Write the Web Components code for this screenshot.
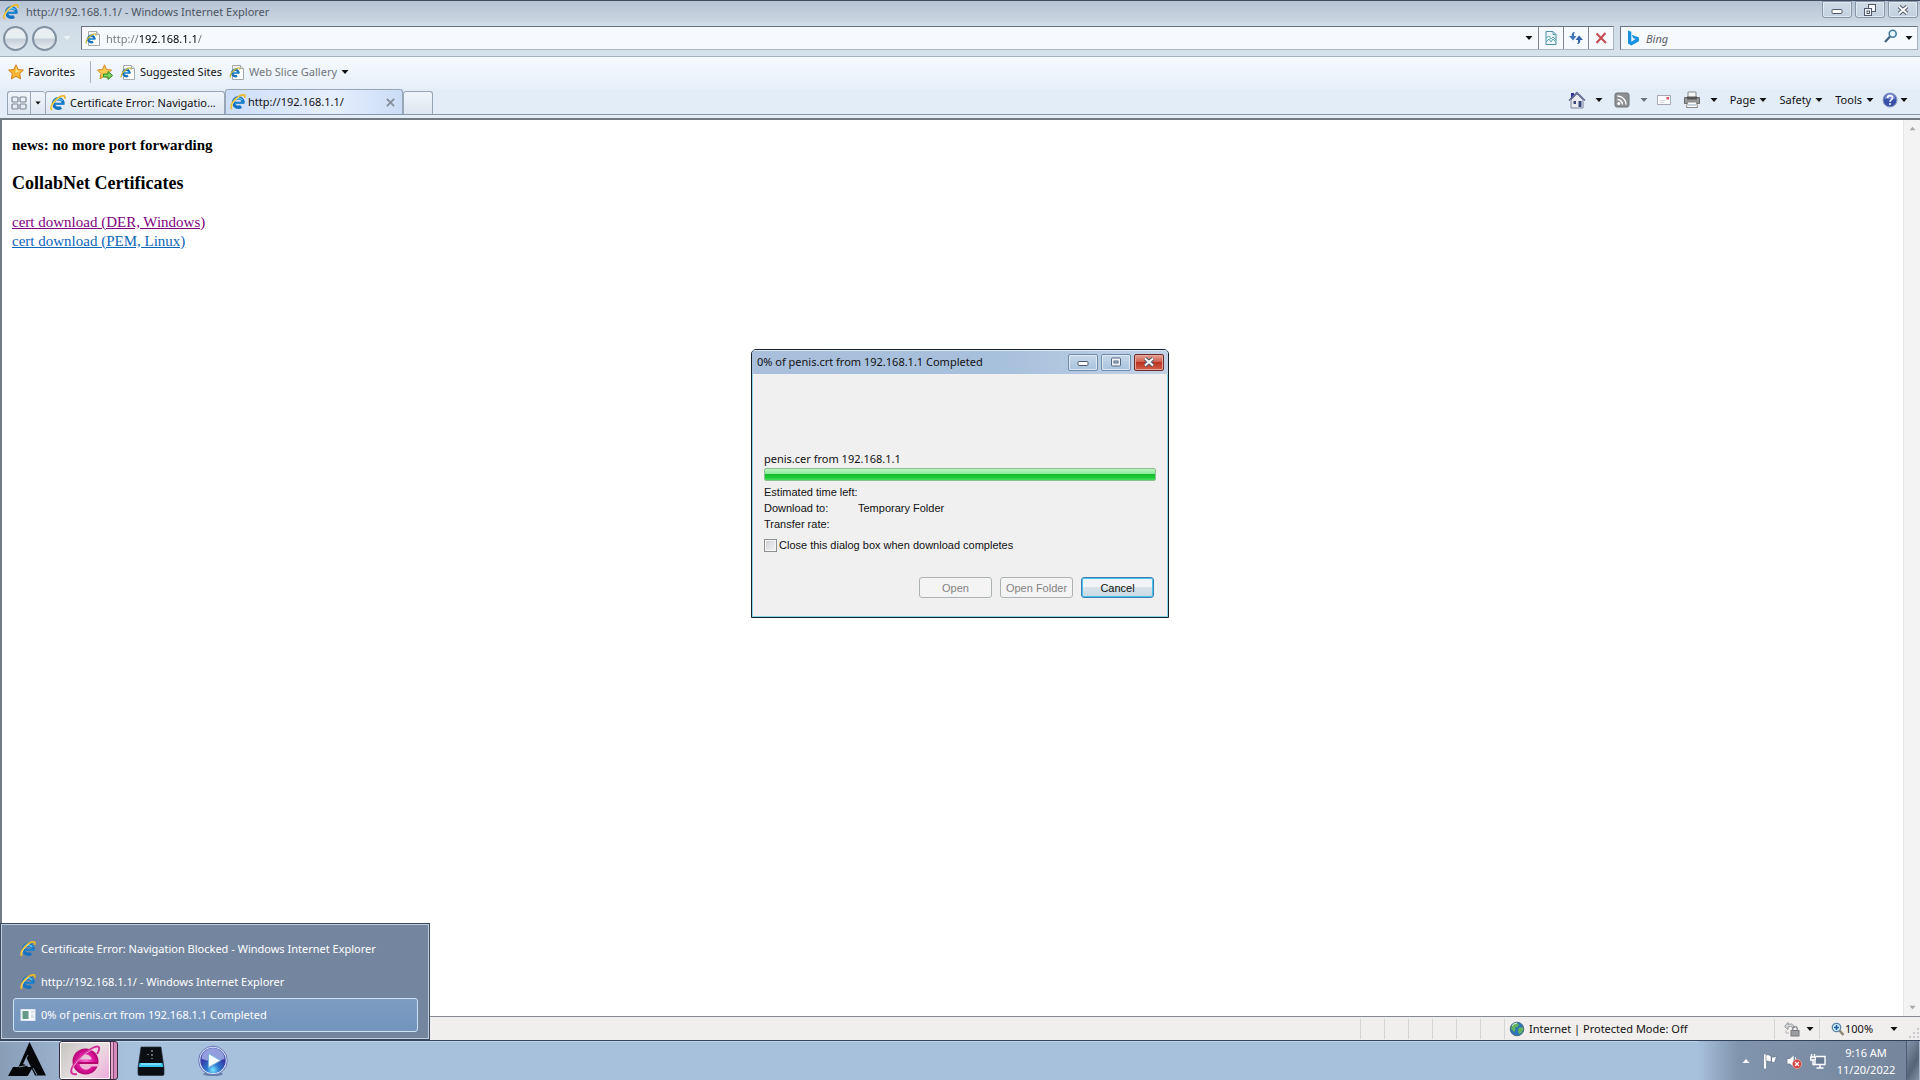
<!DOCTYPE html>
<html lang="en">
<head>
<meta charset="utf-8">
<title>http://192.168.1.1/ - Windows Internet Explorer</title>
<style>
html,body{height:100%;margin:0;overflow:hidden}
body{font:11px/16px "Noto Sans","Open Sans",sans-serif;color:#111;background:#a7c0dc}
</style>
</head>
<body>
<win-desktop>
  <ie-window>
    <title-bar slot="title">http://192.168.1.1/ - Windows Internet Explorer</title-bar>
    <address-row slot="address"></address-row>
    <favorites-bar slot="favorites"></favorites-bar>
    <tab-row slot="tabs"></tab-row>
    <web-page></web-page>
    <status-bar slot="status"></status-bar>
  </ie-window>
  <task-bar></task-bar>
  <jump-list slot="over"></jump-list>
  <download-dialog slot="over"></download-dialog>
</win-desktop>
<script>
const ICONS = {
  ie: [16, `<circle cx="8.3" cy="8.5" r="4.8" fill="none" stroke="#1573c4" stroke-width="3.4" stroke-dasharray="25.8 4.4" stroke-dashoffset="-4.4"/><path d="M4 7.2a4.6 4.6 0 0 1 8.300-1" fill="none" stroke="#58c6f4" stroke-width="1.600"/><path d="M5 8.800h9.500" stroke="#1e83cf" stroke-width="2.200"/><path d="M1.900 15C-.8 12.500 4 5 9.500 2 13-.1 16 .6 14.600 3.900" fill="none" stroke="#e9b927" stroke-width="1.700"/><path d="M2 13.500C1.200 11 5 5.500 9 3" fill="none" stroke="#fff0a0" stroke-width=".7"/>`],
  iepage: [16, `<path d="M3.500 1.500h8l3 3v11h-11z" fill="#fff" stroke="#a4a9b0"/><path d="M11.500 1.500v3h3" fill="#e5e9ee" stroke="#a4a9b0"/><circle cx="6.300" cy="9" r="3.200" fill="none" stroke="#1770b8" stroke-width="2.400" stroke-dasharray="17 3.100" stroke-dashoffset="-3.100"/><path d="M4 9h6.500" stroke="#1e83cf" stroke-width="1.600"/><path d="M1.500 13.500C0 11 4 6 8 4.300c2-.8 3.400-.4 2.800 1.400" fill="none" stroke="#c6b93c" stroke-width="1.300"/>`],
  star: [16, `<path d="M8 .8l2.200 4.700 5.200.6-3.800 3.600 1 5.200L8 12.300l-4.600 2.600 1-5.200L.6 6.100l5.200-.6z" fill="#fbb731" stroke="#cf7d1d"/><path d="M8 3l1.500 3.400 3.300.3-5.300 2z" fill="#ffe58c"/>`],
  staradd: [16, `<path d="M7.500.8l2.100 4.700 5 .6-3.700 3.500.9 5-4.300-2.400L3 14.800l1-5.200L.5 6.100l5-.6z" fill="#fcca50" stroke="#cf8a25"/><path d="M6.500 10h4.500V7.500l4.700 4-4.700 4V13H6.500z" fill="#7ed35c" stroke="#2f8e2a"/>`],
  down: [8, `<path d="M.5 2h7L4 6z" fill="currentColor"/>`],
  up: [8, `<path d="M.5 6h7L4 2z" fill="currentColor"/>`],
  quick: [16, `<g fill="none" stroke="#7c8792" stroke-width="1.200"><rect x="1" y="2" width="6" height="5" rx="1"/><rect x="9" y="2" width="6" height="5" rx="1"/><rect x="1" y="9" width="6" height="5" rx="1"/><rect x="9" y="9" width="6" height="5" rx="1"/></g>`],
  x: [10, `<path d="M1 1l8 8M9 1L1 9" stroke="#858e99" stroke-width="2"/>`],
  stop: [12, `<path d="M1.500 1.500L11 11M10.500 1L1.500 11" stroke="#c44b50" stroke-width="2"/>`],
  compat: [14, `<path d="M2 .5h7l3 3v10H2z" fill="#eef8fb" stroke="#4d8fa6"/><path d="M9 .5v3h3M2 7l3-2 2 3 2-2 3 3M2 11l3-3 2 3 2-3 3 3" fill="none" stroke="#5aa2b5"/>`],
  refresh: [16, `<path d="M7 2C4 2 3.700 4 3.700 6H1l4 4.500L8.500 6H6c0-2 0-3 1-4z" fill="#4078b8"/><path d="M9 14c3 0 3.300-2 3.300-4H15l-4-4.500L7.500 10H10c0 2 0 3-1 4z" fill="#3162ac"/>`],
  bing: [16, `<path d="M3 .5l3.300 1.200v10.100L10.500 9l-2.400-1-1.300-3.300L14 7.500v3.700L6.300 15.500 3 13.500z" fill="#1692e0"/>`],
  search: [14, `<circle cx="8.700" cy="4.800" r="3.500" fill="#eaf7fc" stroke="#407fa0" stroke-width="1.600"/><path d="M6 7.500L1 13" stroke="#45607a" stroke-width="2.200"/>`],
  home: [18, `<path d="M3 2h3v6H3z" fill="#34319b"/><path d="M3 9l6-6 6 6v8H3z" fill="#e9ebf0" stroke="#7b819a"/><path d="M1 9.500L9 1.500l8 8" fill="none" stroke="#5d6791" stroke-width="1.400"/><path d="M5.500 10h2.500v3H5.500zM10.500 10h3v6h-3z" fill="#3a4779"/>`],
  rss: [16, `<rect x="1" y="1" width="14" height="14" rx="2" fill="#8d9092" stroke="#6f7375"/><circle cx="4.800" cy="11.500" r="1.500" fill="#fff"/><path d="M3.500 7.500a5 5 0 0 1 5 5M3.500 4a8.500 8.500 0 0 1 8.500 8.500" fill="none" stroke="#fff" stroke-width="1.500"/>`],
  mail: [16, `<rect x="1.500" y="3.500" width="13" height="9" fill="#fbfbfc" stroke="#a8a9b0"/><path d="M4 8.500h5M4 10.500h4" stroke="#d4d6dd"/><path d="M10.500 5h2.500v2.500h-2.500z" fill="#d2565f"/>`],
  print: [18, `<path d="M5 1h8v6H5z" fill="#f5f5f5" stroke="#8b8b8b"/><path d="M1.500 6.500h15v6h-15z" fill="#979797" stroke="#676767"/><path d="M4 5.500h10v3H4z" fill="#555"/><path d="M4.500 11h9l1 5.500h-11z" fill="#fff" stroke="#888"/><path d="M5 14h8" stroke="#8ca8b8"/>`],
  help: [16, `<circle cx="8" cy="8" r="7" fill="#3852aa" stroke="#8f9dbd"/><path d="M2.500 7a5.500 5.500 0 0 1 11 0z" fill="#7186cf"/><path d="M5.500 6c.2-3.500 5.300-3 5 0-.2 2-2.500 1.800-2.500 3.700" fill="none" stroke="#fff" stroke-width="1.700"/><circle cx="8" cy="12" r="1" fill="#fff"/>`],
  globe: [16, `<circle cx="8" cy="8" r="6.800" fill="#2d75ba" stroke="#466c83"/><path d="M4 2.500l4-.8 2 2-2 2.500-2 .5.500 2.300L5 11 2 7.500zM9.500 7l4-1 1 2-2 4-2.500 1.300-1-3z" fill="#64b45a"/><path d="M3 5a6 6 0 0 1 5-3" stroke="#d7f0f7" fill="none"/>`],
  lock: [16, `<path d="M.5 5.500L4 1.500v2c4-1.500 6 .5 6.500 3H8.300C7.500 5.500 6 5 4 6v2.500z" fill="#d3d4d6" stroke="#8f9194" stroke-width=".9"/><path d="M2 9v3h3" fill="none" stroke="#b4b6b9"/><path d="M8.700 9.500V8a2.300 2.300 0 0 1 4.600 0v1.500" fill="none" stroke="#85878a" stroke-width="1.300"/><rect x="7" y="9.500" width="8" height="5.500" fill="#9b9da0" stroke="#77797c"/>`],
  zoom: [14, `<path d="M8 8l4.500 5" stroke="#8f8874" stroke-width="2.600"/><circle cx="5.500" cy="5.500" r="4.200" fill="#d6eefb" stroke="#5a83a6" stroke-width="1.300"/><path d="M5.500 3v5M3 5.500h5" stroke="#1b5f9e" stroke-width="1.600"/>`],
  grip: [12, `<g fill="#c9cbce"><path d="M9 1h2v2H9zM9 5h2v2H9zM9 9h2v2H9zM5 5h2v2H5zM5 9h2v2H5zM1 9h2v2H1z"/></g>`],
  min: [14, `<rect x="2" y="6.500" width="10" height="4" rx="1" fill="#fff" stroke="#4e5a6a"/>`],
  restore: [14, `<rect x="5.500" y="1.500" width="7" height="7" fill="#f5f8fb" stroke="#4e5a6a"/><rect x="1.500" y="5.500" width="7" height="7" fill="#f5f8fb" stroke="#4e5a6a"/><rect x="4" y="8" width="2.500" height="2.500" fill="none" stroke="#4e5a6a"/>`],
  max: [14, `<rect x="2.500" y="3" width="9" height="8" rx="1" fill="#eef3f9" stroke="#56677e"/><rect x="5" y="6" width="4" height="2" fill="#b6c9de" stroke="#56677e"/>`],
  close: [14, `<path d="M3 3.500l8 7M11 3.500l-8 7" stroke="#4e5a6a" stroke-width="4"/><path d="M3 3.500l8 7M11 3.500l-8 7" stroke="#fff" stroke-width="2"/>`],
  app: [16, `<rect x="1" y="2.500" width="14" height="11" fill="#f5fafb" stroke="#dfe8ee"/><rect x="2.500" y="4" width="6" height="8" fill="#659a86"/><path d="M11 5h3M11 8h2M11 10h3" stroke="#b9c7d2"/>`],
  flag: [16, `<path d="M3 1.500v14" stroke="#fff" stroke-width="2"/><path d="M4 2c3-1 3 .7 5 .8V9C7 9 7 7.500 4 8.300zM9.500 4c2 .5 3-.3 5-.5l-2 6-3-.5z" fill="#fff" stroke="#5a6a7f" stroke-width=".6"/>`],
  sound: [16, `<path d="M1 5.500h3L8 1.500v13L4 11H1z" fill="#fff" stroke="#64738a" stroke-width=".7"/><path d="M9.500 4v8" stroke="#e4eaf2"/><circle cx="11" cy="11" r="4.500" fill="#d33c38" stroke="#f5b4ae" stroke-width=".7"/><path d="M9 9l4 4M13 9l-4 4" stroke="#fff" stroke-width="1.500"/>`],
  net: [16, `<path d="M6 3.500h9v8H5V8" fill="#687a91" stroke="#fff" stroke-width="1.400"/><path d="M10 12v2.500M6.500 15h7M1.500 1v3M4.500 1v3M.8 4h4.500v3H.8zM3 7v4.500h2" fill="none" stroke="#fff" stroke-width="1.400"/>`],
  start: [38, `<path d="M21.500 0L38 33.500H27L18.300 15.500 15 22l3 1 4 4-3 4.500L20 34H0l5-9h5.500z" fill="#05070a"/><path d="M10.500 25H25l-5 8.500" fill="#05070a"/><path d="M11 25l9-1.800M20 13l-3 5.500M25 26l4 7" stroke="#7f91a8" fill="none"/>`],
  pinkie: [32, `<defs><radialGradient id="p"><stop stop-color="#f86bd0"/><stop offset=".65" stop-color="#df169f"/><stop offset="1" stop-color="#b1056e"/></radialGradient></defs><circle cx="16.500" cy="16.500" r="13" fill="url(#p)"/><path d="M10.500 14.500a6 5 0 0 1 12 0z" fill="#e7c6dc"/><path d="M10.500 18.500h19v3h-7c-3 5-11 4-12-3z" fill="#edb4d6"/><path d="M9 18h20" stroke="#b5066f" stroke-width="2"/><path d="M8 29C-3 31 3 19 15 9S34-1 28 9" fill="none" stroke="#d23198" stroke-width="2"/><path d="M6 27C0 27 7 16 15 10S28 2 28 5" fill="none" stroke="#fac0e6" stroke-width=".8"/>`],
  drive: [30, `<path d="M5 1h20l3 21v6q0 1.500-1.500 1.500h-23Q2 29.500 2 28v-6z" fill="#0b0e13" stroke="#252f3d" stroke-width=".7"/><path d="M3.500 17h23l.7 4H2.800z" fill="#39c4f0"/><path d="M5 18h20" stroke="#b0f3ff"/><path d="M16 4v2M16 8v2M16 12v1M12 8v1" stroke="#9aa1a7" stroke-width="1.300"/>`],
  wmp: [32, `<defs><radialGradient id="w" cy=".85"><stop stop-color="#7beaff"/><stop offset=".45" stop-color="#2d78cf"/><stop offset="1" stop-color="#353ea8"/></radialGradient></defs><ellipse cx="16" cy="29" rx="10" ry="2" fill="#6883a8"/><circle cx="16" cy="15.500" r="13.500" fill="url(#w)" stroke="#dce7fa" stroke-width="1.600"/><circle cx="16" cy="15.500" r="14.300" fill="none" stroke="#505cac" stroke-width=".8"/><path d="M4.500 14a11.500 11 0 0 1 23 0q-11.500 4-23 0z" fill="#b9c6f3" opacity=".7"/><path d="M11.500 8.500v14l12-7z" fill="#f4fbff" stroke="#7bb3dc"/>`]
};

const define = (name, markup, setup) => {
  const template = document.createElement('template');
  template.innerHTML = `<style>*,:host{box-sizing:border-box}:host{display:block}button,input{font:inherit;color:inherit;margin:0}button{padding:0;border:0;background:none}</style>${markup}`;
  customElements.define(name, class extends HTMLElement {
    constructor() {
      super();
      this.attachShadow({mode: 'open'}).append(template.content.cloneNode(true));
    }
    connectedCallback() { if (setup) setup(this); }
  });
};

define('ui-icon', `<style>:host{display:inline-flex;flex:none}svg{display:block}</style><svg aria-hidden="true"></svg>`, el => {
  const [box, art] = ICONS[el.getAttribute('name')];
  const size = el.getAttribute('size') || box;
  const svg = el.shadowRoot.querySelector('svg');
  svg.setAttribute('viewBox', `0 0 ${box} ${box}`);
  svg.setAttribute('width', size);
  svg.setAttribute('height', size);
  svg.innerHTML = art;
});

define('win-desktop', `<style>
:host{display:flex;flex-direction:column;height:100vh;position:relative}
</style><slot></slot><slot name="over"></slot>`);

define('ie-window', `<style>
:host{display:flex;flex-direction:column;flex:1;min-height:0;background:#d3dfeb}
main{flex:1;min-height:0;display:flex;flex-direction:column}
</style><slot name="title"></slot><slot name="address"></slot><slot name="favorites"></slot><slot name="tabs"></slot><main><slot></slot></main><slot name="status"></slot>`);

define('window-button', `<style>
:host{display:flex}
button{width:30px;height:17px;display:flex;align-items:center;justify-content:center;border:1px solid #8796a9;border-radius:0 0 3px 3px;background:linear-gradient(#d0dbe7,#c2d0df);box-shadow:inset 0 0 0 1px #e0e8f0}
:host([kind=dialog]) button{border-color:#6e8aac;border-radius:2px;background:linear-gradient(#c7d8eb,#a9c2de)}
:host([kind=danger]) button{border-color:#6f2a2c;border-radius:2px;background:linear-gradient(#e6a298,#d0604e 45%,#b9331f 50%,#d2614b);box-shadow:inset 0 0 0 1px #e7a89c}
</style><button type="button"><slot></slot></button>`, el => el.shadowRoot.querySelector('button').setAttribute('aria-label', el.getAttribute('label')));

define('title-bar', `<style>
:host{display:flex;height:22px;border-top:1px solid #3f4b5e;background:linear-gradient(#b6c3d3,#cbd6e2);align-items:center;gap:7px;padding:0 2px 0 3px;color:#4a5561}
span{flex:1}
div{display:flex;gap:3px;align-self:flex-start}
</style><ui-icon name="ie"></ui-icon><span><slot></slot></span><div><window-button label="Minimize"><ui-icon name="min"></ui-icon></window-button><window-button label="Restore"><ui-icon name="restore"></ui-icon></window-button><window-button label="Close"><ui-icon name="close"></ui-icon></window-button></div>`);

define('address-row', `<style>
:host{display:flex;height:35px;padding:4px 2px 6px 3px;background:linear-gradient(#cfdbe6,#d5e3ec);border-bottom:1px solid #a3b3c2;align-items:center}
.nav{width:25px;height:25px;border-radius:50%;border:2px solid #8291a2;background:linear-gradient(#e9eef3 48%,#c4ced8 52%,#e6edf3);margin-right:4px;flex:none}
.recent{color:#edf4f8;margin:0 10px 0 2px;display:flex}
.box{display:flex;align-items:center;height:24px;border:1px solid #69737f;border-bottom-color:#a9b4c0;border-right-color:#a9b4c0;background:#f6f9fd}
.url{flex:1;padding-left:3px;margin-right:6px}
input{border:0;outline:0;background:none;padding:0;min-width:0;flex:1;height:20px}
.url input{margin-left:5px;color:#111;background:linear-gradient(90deg,#73777c 33px,#000 33px 91px,#73777c 91px);-webkit-background-clip:text;background-clip:text;-webkit-text-fill-color:transparent}
.drop{width:19px;display:flex;justify-content:center}
.cell{width:25px;height:22px;border-left:1px solid #7d8794;display:flex;align-items:center;justify-content:center}
.search{width:298px;padding-left:4px}
.search input{margin-left:5px}
input::placeholder{font-style:italic;color:#5c6268;opacity:1}
.search .drop{width:16px;margin-left:3px}
</style><button class="nav" aria-label="Back"></button><button class="nav" aria-label="Forward"></button><button class="recent" aria-label="Recent pages"><ui-icon name="down"></ui-icon></button>
<div class="box url"><ui-icon name="iepage"></ui-icon><input type="text" aria-label="Address" value="http://192.168.1.1/"><button class="drop" aria-label="Address history"><ui-icon name="down"></ui-icon></button><button class="cell" aria-label="Compatibility View"><ui-icon name="compat"></ui-icon></button><button class="cell" aria-label="Refresh"><ui-icon name="refresh"></ui-icon></button><button class="cell" aria-label="Stop"><ui-icon name="stop"></ui-icon></button></div>
<div class="box search"><ui-icon name="bing"></ui-icon><input type="text" aria-label="Search" placeholder="Bing"><button aria-label="Search"><ui-icon name="search"></ui-icon></button><button class="drop" aria-label="Search options"><ui-icon name="down"></ui-icon></button></div>`);

define('favorites-bar', `<style>
:host{display:flex;height:32px;align-items:center;padding:0 8px 2px;background:linear-gradient(#f7fafe,#e6eff9)}
button{display:flex;align-items:center;gap:4px}
.fav{padding-right:15px;border-right:1px solid #a7b1be;height:22px;margin-right:6px}
.sites{margin:0 7px}
.slices{color:#72777d}
.slices ui-icon[name=down]{color:#111}
</style><button class="fav"><ui-icon name="star"></ui-icon>Favorites</button><button aria-label="Add to Favorites bar"><ui-icon name="staradd"></ui-icon></button><button class="sites"><ui-icon name="iepage"></ui-icon>Suggested Sites</button><button class="slices"><ui-icon name="iepage"></ui-icon>Web Slice Gallery<ui-icon name="down"></ui-icon></button>`);

define('tab-row', `<style>
:host{display:flex;align-items:flex-start;height:31px;padding-left:7px;background:#e3edf8;border-bottom:2px solid #727a84}
.tabs{display:flex;align-items:flex-end;height:26px;flex:1;border-bottom:1px solid #8899aa}
.tab,.quick,.new{height:23px;border:1px solid #98a7b7;border-bottom:0;border-radius:3px 3px 0 0;background:linear-gradient(#f1f5fb,#dde7f2);display:flex;align-items:center}
.quick{width:38px;border-right:0}
.quick button{display:flex;justify-content:center;height:22px;align-items:center}
.quick button:first-child{width:23px;border-right:1px solid #98a7b7}
.quick button:last-child{flex:1}
.tab{width:180px;padding:0 4px;gap:4px}
.tab.on{width:178px;height:25px;background:linear-gradient(90deg,#cdddf8,#e6effc 60%,#cbdcf7);gap:2px}
.tab span{flex:1;white-space:nowrap;text-align:left}
.tab.on ui-icon[name=x]{margin-right:3px}
.new{width:30px}
.commands{display:flex;align-items:center;margin-left:auto;padding:0 12px 2px 0;height:26px;gap:11px}
.commands button{display:flex;align-items:center;gap:3px}
.commands .home,.commands .print{gap:9px}
.commands .rss{gap:10px}
.commands .mail{margin-left:-3px}
.commands .menu{gap:4px;margin-left:1px}
.rss ui-icon[name=down]{color:#6b747e}
.commands .help{gap:2px;margin-left:-3px}
</style><div class="tabs"><div class="quick"><button aria-label="Quick tabs"><ui-icon name="quick"></ui-icon></button><button aria-label="Tab list"><ui-icon name="down" size="6"></ui-icon></button></div><button class="tab"><ui-icon name="ie"></ui-icon><span>Certificate Error: Navigatio...</span></button><button class="tab on"><ui-icon name="ie"></ui-icon><span>http://192.168.1.1/</span><ui-icon name="x" size="9"></ui-icon></button><button class="new" aria-label="New tab"></button>
<div class="commands"><button class="home" aria-label="Home"><ui-icon name="home"></ui-icon><ui-icon name="down"></ui-icon></button><button class="rss" aria-label="Feeds"><ui-icon name="rss"></ui-icon><ui-icon name="down"></ui-icon></button><button class="mail" aria-label="Read mail"><ui-icon name="mail"></ui-icon></button><button class="print" aria-label="Print"><ui-icon name="print"></ui-icon><ui-icon name="down"></ui-icon></button><button class="menu">Page<ui-icon name="down"></ui-icon></button><button class="menu">Safety<ui-icon name="down"></ui-icon></button><button class="menu">Tools<ui-icon name="down"></ui-icon></button><button class="help" aria-label="Help"><ui-icon name="help"></ui-icon><ui-icon name="down"></ui-icon></button></div></div>`);

define('web-page', `<style>
:host{display:flex;flex:1;min-height:0;background:#fff;border-left:2px solid #727a84}
article{flex:1;padding:16px 10px;font:15px/19px "Liberation Serif",serif;color:#000}
h4{font-size:15px;margin:0 0 19px}
h3{font-size:18px;margin:0 0 20px}
a{color:#0c66b8}
a.seen{color:#800080}
.bar{width:17px;background:#f3f3f4;border-left:1px solid #e6e6e8;color:#a5a8ad;display:flex;flex-direction:column;justify-content:space-between;align-items:center;padding:5px 0}
.bar button{display:flex}
</style><article><h4>news: no more port forwarding</h4><h3>CollabNet Certificates</h3><a class="seen" href="#der">cert download (DER, Windows)</a><br><a href="#pem">cert download (PEM, Linux)</a></article><div class="bar"><button aria-label="Scroll up"><ui-icon name="up" size="7"></ui-icon></button><button aria-label="Scroll down"><ui-icon name="down" size="7"></ui-icon></button></div>`);

define('status-bar', `<style>
:host{display:flex;height:24px;justify-content:flex-end;align-items:center;background:#f1efee;border-top:1px solid #858a91}
i{width:24px;height:20px;border-left:1px solid #d5d4d4}
.zone{display:flex;gap:4px;align-items:center;width:270px;border-left:1px solid #d5d4d4;height:20px;padding-left:4px}
button{display:flex;align-items:center;height:20px;border-left:1px solid #d5d4d4}
.lock{width:45px;padding-left:9px;gap:6px}
.zoom{width:101px;padding-left:11px}
.zoom ui-icon[name=down]{margin-left:17px}
.zoom ui-icon[name=grip]{margin-left:auto;align-self:flex-end}
</style><i></i><i></i><i></i><i></i><i></i><i></i><div class="zone"><ui-icon name="globe"></ui-icon><span>Internet | Protected Mode: Off</span></div><button class="lock" aria-label="Privacy report"><ui-icon name="lock"></ui-icon><ui-icon name="down"></ui-icon></button><button class="zoom"><ui-icon name="zoom"></ui-icon>100%<ui-icon name="down"></ui-icon><ui-icon name="grip"></ui-icon></button>`);

define('task-bar', `<style>
:host{display:flex;height:40px;border-top:1px solid #33435e;box-shadow:inset 0 1px #c2d4e8;background:linear-gradient(90deg,#899db7,#9db5d1 70px,#a7c0dc 130px);align-items:stretch}
button{display:flex;align-items:center;justify-content:center}
.start{width:54px;align-items:flex-start;padding-top:1px}
.stack{margin-left:5px;width:59px;display:flex;border:1px solid #39283a;border-radius:3px;background:linear-gradient(90deg,transparent 50px,#4d3046 50px 51px,#e4a5cf 51px 53px,#85456f 53px 54px,#d48abb 54px),#e0c7dc}
.stack button{width:50px;background:linear-gradient(130deg,#c4c4bf,#e9e0e2 55%,#f0a9dc);border:1px solid #fff;border-radius:2px}
.drive{margin-left:18px}
.wmp{margin-left:31px}
.tray{margin-left:auto;display:flex;align-items:center;background:linear-gradient(90deg,#a7c0dc,#8194ad 40px,#74859b);padding-left:44px;color:#fff}
.tray .up{margin-right:12px}
.icons{display:flex;gap:8px}
time{text-align:center;width:80px;line-height:17px}
.show{width:14px;border-left:1px solid #4d5c70;background:linear-gradient(120deg,#8494a8,#566477 60%,#8494a8);border-right:1px solid #a9b7c8;align-self:stretch}
</style><button class="start" aria-label="Start"><ui-icon name="start"></ui-icon></button><div class="stack"><button aria-label="Internet Explorer"><ui-icon name="pinkie"></ui-icon></button></div><button class="drive" aria-label="Drive"><ui-icon name="drive"></ui-icon></button><button class="wmp" aria-label="Media Player"><ui-icon name="wmp"></ui-icon></button>
<div class="tray"><button class="up" aria-label="Show hidden icons"><ui-icon name="up"></ui-icon></button><div class="icons"><ui-icon name="flag"></ui-icon><ui-icon name="sound"></ui-icon><ui-icon name="net"></ui-icon></div><time>9:16 AM<br>11/20/2022</time><button class="show" aria-label="Show desktop"></button></div>`);

define('jump-list', `<style>
:host{position:absolute;left:0;bottom:40px;width:430px;padding:8px 11px 7px 12px;border:1px solid #38475f;box-shadow:inset 0 0 0 1px #c0cddb;background:#74869f;color:#fff}
button{display:flex;width:100%;height:33px;align-items:center;gap:5px;padding:0 6px;border:1px solid transparent;text-align:left}
.on{height:34px;background:linear-gradient(#7d9cc2,#7294bd);border-color:#cfe1f5;border-radius:3px}
</style><button><ui-icon name="ie"></ui-icon>Certificate Error: Navigation Blocked - Windows Internet Explorer</button><button><ui-icon name="ie"></ui-icon>http://192.168.1.1/ - Windows Internet Explorer</button><button class="on"><ui-icon name="app"></ui-icon>0% of penis.crt from 192.168.1.1 Completed</button>`);

define('download-dialog', `<style>
:host{position:absolute;top:349px;left:0;right:0;margin:0 auto;width:418px;border:1px solid #14202e;border-radius:5px 5px 0 0;background:#f0f0f0;box-shadow:inset 0 0 0 1px #8bd5ec;color:#111;overflow:hidden}
header{height:24px;display:flex;align-items:center;gap:3px;padding:0 4px 0 5px;background:linear-gradient(90deg,#a9bfdc,#a7c0dc 60%,#c2d2e5);box-shadow:inset 0 1px #dce8f4}
header span{flex:1}
section{padding:77px 12px 19px;font:11px/16px "Liberation Sans",sans-serif}
.file{font:11px/16px "Noto Sans","Open Sans",sans-serif}
.bar{height:13px;margin:1px 0 3px;border:1px solid #8cbf93;border-radius:2px;background:linear-gradient(#b5f6bf,#8fe99c 45%,#12bd2c 50%,#25cc3d 80%,#43db58)}
dl{display:grid;grid-template-columns:94px 1fr;margin:0}
dt{white-space:nowrap}
dd{margin:0}
label{display:flex;align-items:center;gap:2px;margin-top:5px}
input{appearance:none;width:13px;height:13px;border:1px solid #8e8f8f;background:linear-gradient(135deg,#cbcfd5,#f6f6f6);box-shadow:inset 0 0 0 1px #f4f4f4}
footer{display:flex;justify-content:flex-end;gap:8px;padding-right:2px;margin-top:24px}
footer button{width:73px;height:21px;border:1px solid #adb2b5;border-radius:3px;color:#838383;background:#f4f4f4}
footer .cancel{border-color:#3c7fb1;color:#111;background:linear-gradient(#f0f4f6 50%,#d8e2e8 50%,#c9dae4);box-shadow:inset 0 0 0 1px #48c4ec}
</style><header><span>0% of penis.crt from 192.168.1.1 Completed</span><window-button kind="dialog" label="Minimize"><ui-icon name="min"></ui-icon></window-button><window-button kind="dialog" label="Maximize"><ui-icon name="max"></ui-icon></window-button><window-button kind="danger" label="Close"><ui-icon name="close"></ui-icon></window-button></header>
<section><div class="file">penis.cer from 192.168.1.1</div><div class="bar" role="progressbar" aria-label="Download progress"></div><dl><dt>Estimated time left:</dt><dd></dd><dt>Download to:</dt><dd>Temporary Folder</dd><dt>Transfer rate:</dt><dd></dd></dl><label for="autoclose"><input type="checkbox" id="autoclose">Close this dialog box when download completes</label><footer><button disabled>Open</button><button disabled>Open Folder</button><button class="cancel">Cancel</button></footer></section>`);
</script>
</body>
</html>
